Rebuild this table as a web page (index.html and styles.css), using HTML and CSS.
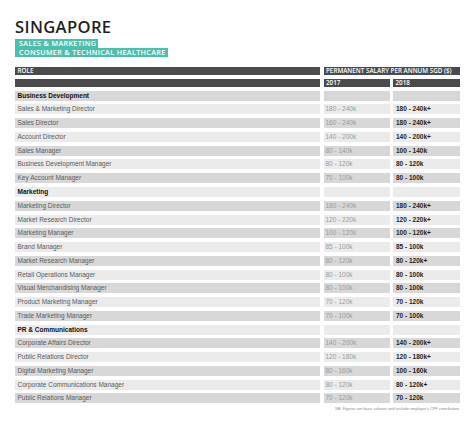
FILE: index.html
```html
<!DOCTYPE html>
<html>
<head>
<meta charset="utf-8">
<link rel="stylesheet" href="styles.css">
</head>
<body>
<div class="page">
  <h1 class="title">SINGAPORE</h1>
  <div class="subtitle">
    <span class="tag">SALES &amp; MARKETING</span>
    <span class="tag">CONSUMER &amp; TECHNICAL HEALTHCARE</span>
  </div>
  <div class="table">
    <div class="row head">
      <div class="cell">ROLE</div>
      <div class="cell span2">PERMANENT SALARY PER ANNUM SGD ($)</div>
    </div>
    <div class="row head">
      <div class="cell"></div>
      <div class="cell">2017</div>
      <div class="cell">2018</div>
    </div>

    <div class="row cat dark"><div class="cell">Business Development</div><div class="cell"></div><div class="cell"></div></div>
    <div class="row light"><div class="cell">Sales &amp; Marketing Director</div><div class="cell">180 - 240k</div><div class="cell">180 - 240k+</div></div>
    <div class="row dark"><div class="cell">Sales Director</div><div class="cell">160 - 240k</div><div class="cell">180 - 240k+</div></div>
    <div class="row light"><div class="cell">Account Director</div><div class="cell">140 - 200k</div><div class="cell">140 - 200k+</div></div>
    <div class="row dark"><div class="cell">Sales Manager</div><div class="cell">80 - 140k</div><div class="cell">100 - 140k</div></div>
    <div class="row light"><div class="cell">Business Development Manager</div><div class="cell">80 - 120k</div><div class="cell">80 - 120k</div></div>
    <div class="row dark"><div class="cell">Key Account Manager</div><div class="cell">70 - 100k</div><div class="cell">80 - 100k</div></div>

    <div class="row cat light"><div class="cell">Marketing</div><div class="cell"></div><div class="cell"></div></div>
    <div class="row dark"><div class="cell">Marketing Director</div><div class="cell">180 - 240k</div><div class="cell">180 - 240k+</div></div>
    <div class="row light"><div class="cell">Market Research Director</div><div class="cell">120 - 220k</div><div class="cell">120 - 220k+</div></div>
    <div class="row dark"><div class="cell">Marketing Manager</div><div class="cell">100 - 120k</div><div class="cell">100 - 120k+</div></div>
    <div class="row light"><div class="cell">Brand Manager</div><div class="cell">85 - 100k</div><div class="cell">85 - 100k</div></div>
    <div class="row dark"><div class="cell">Market Research Manager</div><div class="cell">80 - 120k</div><div class="cell">80 - 120k+</div></div>
    <div class="row light"><div class="cell">Retail Operations Manager</div><div class="cell">80 - 100k</div><div class="cell">80 - 100k</div></div>
    <div class="row dark"><div class="cell">Visual Merchandising Manager</div><div class="cell">80 - 100k</div><div class="cell">80 - 100k</div></div>
    <div class="row light"><div class="cell">Product Marketing Manager</div><div class="cell">70 - 120k</div><div class="cell">70 - 120k</div></div>
    <div class="row dark"><div class="cell">Trade Marketing Manager</div><div class="cell">70 - 100k</div><div class="cell">70 - 100k</div></div>

    <div class="row cat light"><div class="cell">PR &amp; Communications</div><div class="cell"></div><div class="cell"></div></div>
    <div class="row dark"><div class="cell">Corporate Affairs Director</div><div class="cell">140 - 200k</div><div class="cell">140 - 200k+</div></div>
    <div class="row light"><div class="cell">Public Relations Director</div><div class="cell">120 - 180k</div><div class="cell">120 - 180k+</div></div>
    <div class="row dark"><div class="cell">Digital Marketing Manager</div><div class="cell">80 - 160k</div><div class="cell">100 - 160k</div></div>
    <div class="row light"><div class="cell">Corporate Communications Manager</div><div class="cell">80 - 120k</div><div class="cell">80 - 120k+</div></div>
    <div class="row dark"><div class="cell">Public Relations Manager</div><div class="cell">70 - 120k</div><div class="cell">70 - 120k</div></div>
  </div>
  <p class="note">NB: Figures are basic salaries and exclude employer's CPF contribution.</p>
</div>
</body>
</html>
```

FILE: styles.css
```css
html, body {
  margin: 0;
  padding: 0;
  background: #ffffff;
}

.page {
  width: 445px;
  padding: 17px 0 0 15px;
}

.title {
  margin: 0;
  font-family: "Open Sans", sans-serif;
  font-weight: 600;
  font-size: 16.6px;
  line-height: 20px;
  color: #231f20;
  letter-spacing: 0.35px;
}

.subtitle {
  margin-top: 1.5px;
  display: flex;
  flex-direction: column;
  align-items: flex-start;
  gap: 0.6px;
}

.tag {
  display: block;
  background: #4cbfad;
  color: #ffffff;
  font-family: "Open Sans", sans-serif;
  font-weight: 600;
  font-size: 7.2px;
  line-height: 9px;
  letter-spacing: 0.35px;
  padding: 0 2px 0 4px;
}

.table {
  margin-top: 10px;
  display: flex;
  flex-direction: column;
  gap: 3.77px;
}

.row {
  display: grid;
  grid-template-columns: 305px 66px 67px;
  column-gap: 3.5px;
  height: 10px;
}

.cell {
  font-family: "Liberation Sans", Arial, sans-serif;
  font-size: 6.5px;
  line-height: 10px;
  white-space: nowrap;
  overflow: hidden;
}

.cell:first-child {
  padding-left: 2.5px;
  color: #5a5a5a;
}

.cell:nth-child(2) {
  padding-left: 2px;
  color: #9a9a9a;
}

.cell:nth-child(3) {
  padding-left: 3px;
  color: #1e1e1e;
  font-weight: bold;
}

.dark .cell {
  background: #d8d8d9;
}

.light .cell {
  background: #ebebec;
}

.cat .cell:first-child {
  color: #111111;
  font-weight: bold;
}

.head {
  height: 8px;
}

.head .cell {
  background: #4b4b4d;
  color: #ffffff;
  font-family: "Open Sans", sans-serif;
  font-weight: 600;
  font-size: 6.3px;
  line-height: 8px;
  padding-left: 2.5px;
}

.head .cell.span2 {
  grid-column: span 2;
}

.head .cell:nth-child(3) {
  font-weight: 600;
  color: #ffffff;
}

.note {
  margin: 3px 0 0 0;
  text-align: right;
  font-family: "Liberation Sans", Arial, sans-serif;
  font-size: 3.9px;
  line-height: 6px;
  color: #8a8a8a;
}
```
